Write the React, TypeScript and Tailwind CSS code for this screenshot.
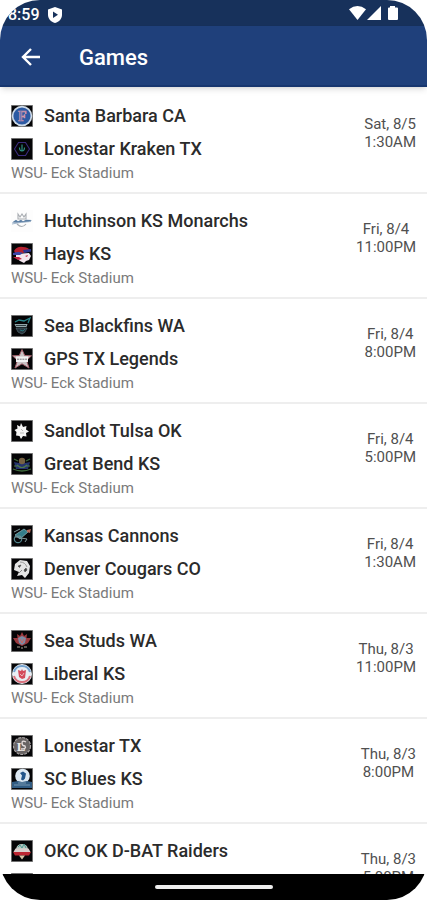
import type { ReactNode } from 'react';

type Team = {
  name?: string;
  logo: ReactNode;
};

type Game = {
  id: number;
  home: Team;
  away: Team;
  venue?: string;
  date: string;
  time: string;
};

const VENUE = 'WSU- Eck Stadium';

const games: Game[] = [
  {
    id: 1,
    home: { name: 'Santa Barbara CA', logo: <SantaBarbaraLogo /> },
    away: { name: 'Lonestar Kraken TX', logo: <KrakenLogo /> },
    venue: VENUE,
    date: 'Sat, 8/5',
    time: '1:30AM',
  },
  {
    id: 2,
    home: { name: 'Hutchinson KS Monarchs', logo: <MonarchsLogo /> },
    away: { name: 'Hays KS', logo: <HaysLogo /> },
    venue: VENUE,
    date: 'Fri, 8/4',
    time: '11:00PM',
  },
  {
    id: 3,
    home: { name: 'Sea Blackfins WA', logo: <BlackfinsLogo /> },
    away: { name: 'GPS TX Legends', logo: <LegendsLogo /> },
    venue: VENUE,
    date: 'Fri, 8/4',
    time: '8:00PM',
  },
  {
    id: 4,
    home: { name: 'Sandlot Tulsa OK', logo: <SandlotLogo /> },
    away: { name: 'Great Bend KS', logo: <GreatBendLogo /> },
    venue: VENUE,
    date: 'Fri, 8/4',
    time: '5:00PM',
  },
  {
    id: 5,
    home: { name: 'Kansas Cannons', logo: <CannonsLogo /> },
    away: { name: 'Denver Cougars CO', logo: <CougarsLogo /> },
    venue: VENUE,
    date: 'Fri, 8/4',
    time: '1:30AM',
  },
  {
    id: 6,
    home: { name: 'Sea Studs WA', logo: <StudsLogo /> },
    away: { name: 'Liberal KS', logo: <LiberalLogo /> },
    venue: VENUE,
    date: 'Thu, 8/3',
    time: '11:00PM',
  },
  {
    id: 7,
    home: { name: 'Lonestar TX', logo: <LonestarLogo /> },
    away: { name: 'SC Blues KS', logo: <BluesLogo /> },
    venue: VENUE,
    date: 'Thu, 8/3',
    time: '8:00PM',
  },
  {
    id: 8,
    home: { name: 'OKC OK D-BAT Raiders', logo: <RaidersLogo /> },
    away: { logo: <LogoFrame /> },
    date: 'Thu, 8/3',
    time: '5:00PM',
  },
];

function LogoFrame({ children, light }: { children?: ReactNode; light?: boolean }) {
  return (
    <svg viewBox="0 0 22 22" className="size-[22px] shrink-0" aria-hidden="true">
      <rect width="22" height="22" fill={light ? '#fdfdfd' : '#8a8a8a'} />
      {!light && <rect x="0.8" y="0.8" width="20.4" height="20.4" fill="#050507" />}
      {children}
    </svg>
  );
}

function SantaBarbaraLogo() {
  return (
    <LogoFrame>
      <circle cx="11" cy="11" r="10.3" fill="#cfdbe8" />
      <circle cx="11" cy="11" r="8.6" fill="#2c5aa3" />
      <text x="11.3" y="16" textAnchor="middle" fontFamily="Liberation Serif, serif" fontWeight="700" fontSize="14" fill="#5b6fb8" stroke="#d797a8" strokeWidth="0.7">
        F
      </text>
    </LogoFrame>
  );
}

function KrakenLogo() {
  return (
    <LogoFrame>
      <path d="M7.500 4.500h7l4 6.500-4 6.500h-7L3.500 11z" fill="none" stroke="#3b2c7c" strokeWidth="1.1" />
      <path d="M11 6.500v6M8.500 9.500c0 2.500 1 3.500 2.500 3.500s2.500-1 2.500-3.500" fill="none" stroke="#2e8f83" strokeWidth="1.2" />
    </LogoFrame>
  );
}

function MonarchsLogo() {
  return (
    <LogoFrame light>
      <path d="M7 4l2 3 2-3 2 3 2-3v5H7zM6 14q5 5 9 0" fill="none" stroke="#a9adb2" strokeWidth="1.1" />
      <path d="M1 12.5l4-2.8 2 1.6 3-1.6 2 1.6 3-1.6 6 .3-3 1.7-7 .6-5 .5z" fill="#5c7fa4" />
      <path d="M1 14q9-2 19-2.5" fill="none" stroke="#8ca5bf" strokeWidth="0.8" />
    </LogoFrame>
  );
}

function HaysLogo() {
  return (
    <LogoFrame>
      <path d="M5 11l13-1 2 3-2 4-3 1-2 2-4-2-4-3z" fill="#f3e6ee" />
      <path d="M3 8q3-5 9-4 5 0 8 4l-8 2-7 1z" fill="#b5202f" />
      <path d="M12 7l8-1v2.500l-7 1.500z" fill="#2a348f" />
      <path d="M2 10q6-2 10 0l-3 2-7 0z" fill="#3a45a8" />
      <path d="M2 14l6 0 3 2-4 1zM14 13l3-1-1 2z" fill="#c22645" />
    </LogoFrame>
  );
}

function BlackfinsLogo() {
  return (
    <LogoFrame>
      <path d="M4 7l4-2 5 1 6-3-2 5" fill="none" stroke="#27848a" strokeWidth="1.3" />
      <path d="M3.500 9h13l-1 3H5z" fill="#93a7ab" />
      <path d="M5 10.5h10" stroke="#152327" strokeWidth="0.8" />
      <path d="M5 13h11l-2 4-3 2-4-2z" fill="#27343c" stroke="#546a72" strokeWidth="0.7" />
      <path d="M9 15l3 1 2-2" fill="none" stroke="#27848a" strokeWidth="0.8" />
    </LogoFrame>
  );
}

function LegendsLogo() {
  return (
    <LogoFrame>
      <path d="M11 1.5l2.7 6 6.8.3-5 4.6 2.500 7.600-7-4.200L4 20l2.500-7.600-5-4.600 6.800-.3z" fill="#c9c2c4" stroke="#a5606b" strokeWidth="1" />
      <path d="M5 8.500h12v5.500H5z" fill="#f2f2f2" />
      <path d="M6 11.2h10" stroke="#77767a" strokeWidth="1" strokeDasharray="2 0.7" />
    </LogoFrame>
  );
}

function SandlotLogo() {
  return (
    <LogoFrame>
      <path d="M10 3l2 4 3.500-1-.5 3.500 3 2-3 1.500.5 3.500-3.500-.5-2 3-1.500-3-3.500-.5.5-3.500-2-2 3-1.500L6 5l3 1.500z" fill="#f4f4f4" />
      <path d="M10 9l2 2M9 13h4" stroke="#aaa" strokeWidth="0.8" />
    </LogoFrame>
  );
}

function GreatBendLogo() {
  return (
    <LogoFrame>
      <path d="M3 6l4 2M19 6l-4 2M2 16q9 4 18 0" stroke="#3f6b3d" strokeWidth="1.3" fill="none" />
      <path d="M3 9l5 1 3-2 3 2 5-1-2 7H5z" fill="#25346f" />
      <circle cx="11" cy="8" r="3.2" fill="#776243" />
      <path d="M6 12q5 5 10 0M3 13h4M15 13h4" stroke="#4f7b4a" strokeWidth="1.1" fill="none" />
    </LogoFrame>
  );
}

function CannonsLogo() {
  return (
    <LogoFrame>
      <path d="M4 10l9-6 4 3-8 7z" fill="#347e8b" stroke="#9ac1c6" strokeWidth="0.7" />
      <circle cx="7" cy="14" r="3.7" fill="none" stroke="#51848c" strokeWidth="1.2" />
      <path d="M10 13l6 1-2 3M3 7l6-3M4 12h6" fill="none" stroke="#859da0" strokeWidth="1" />
      <path d="M16 5l4-1-1 4-3-1z" fill="#b46b5c" />
    </LogoFrame>
  );
}

function CougarsLogo() {
  return (
    <LogoFrame>
      <path d="M4 6l5-4 7 1 3 5-1 7-4 5-3-3-5 1 2-4-5-2z" fill="#e5e5e5" />
      <path d="M7 8l3-1-1.500 2.500zM13 12l2-2 1 2-2 2zM8 15l3-3" fill="#444" stroke="#444" strokeWidth="0.6" />
      <path d="M9 4q5 0 7 5" fill="none" stroke="#9b9b9b" strokeWidth="1" />
    </LogoFrame>
  );
}

function StudsLogo() {
  return (
    <LogoFrame>
      <path d="M11 2l2 4 3-2-.5 4L20 8l-3 5-6 3-6-3-3-5h4.500L6 4l3 2z" fill="#9c3a3f" />
      <path d="M7 8l4-2 4 2-1 5-3 2-3-2z" fill="#7d8ba5" />
      <path d="M9 9l2 4 2-4" fill="none" stroke="#d4635c" strokeWidth="1" />
      <path d="M6 17h3M13 17h3M10 18h2" stroke="#b2a59a" strokeWidth="1.2" />
    </LogoFrame>
  );
}

function LiberalLogo() {
  return (
    <LogoFrame>
      <circle cx="11" cy="11" r="10" fill="#e9eef4" />
      <path d="M3 9a8.300 8.300 0 0 1 16 0" fill="none" stroke="#75a3cf" strokeWidth="2" />
      <path d="M3 13a8.300 8.300 0 0 0 16 0" fill="none" stroke="#d9707c" strokeWidth="2" />
      <path d="M7 7l3 1 1-2 1 2 3-1-1 8-3 1-3-2z" fill="#d44a5c" />
      <path d="M9 11l2 2 2-3" fill="none" stroke="#f0cfd4" strokeWidth="0.8" />
    </LogoFrame>
  );
}

function LonestarLogo() {
  return (
    <LogoFrame>
      <circle cx="11" cy="11" r="8.500" fill="#696464" stroke="#aaa5a5" strokeWidth="1.200" strokeDasharray="3 1" />
      <text x="10" y="15.500" textAnchor="middle" fontFamily="Liberation Serif, serif" fontWeight="700" fontSize="13" fill="#f1ecec">
        L
      </text>
      <path d="M15 7q-4-2-4 1t3 3q2 3-4 3" fill="none" stroke="#e6dede" strokeWidth="1.300" />
    </LogoFrame>
  );
}

function BluesLogo() {
  return (
    <LogoFrame>
      <circle cx="11.500" cy="8" r="7.300" fill="#dce8f2" />
      <path d="M9 5l3-1.500 3 2-1 5-2 2-2-1 1-4z" fill="#205489" />
      <path d="M1 14l6-1 4 1 5-1 5 1v6H1z" fill="#315c83" />
      <path d="M3 17h16M7 15h8" stroke="#7f9fb8" strokeWidth="0.9" />
    </LogoFrame>
  );
}

function RaidersLogo() {
  return (
    <LogoFrame>
      <path d="M5 9q1-5 6-5t6 5z" fill="#b9c8c0" />
      <path d="M7 7l2-2 2 3 2-4 2 4" fill="none" stroke="#4c9a94" strokeWidth="1" />
      <path d="M2.500 12l2-3.500h13l2 3.500z" fill="#d9cfcd" />
      <path d="M2 12h18l-2 3.500H4z" fill="#bc2632" />
      <path d="M8 15.500h6l-3 4z" fill="#d9c4a7" />
    </LogoFrame>
  );
}

function StatusBar() {
  return (
    <div className="flex h-[26px] shrink-0 items-center justify-between bg-[#17315b] pr-7 pl-2 text-white">
      <div className="flex items-center gap-2 pt-1">
        <span className="text-base leading-5 font-medium">8:59</span>
        <svg viewBox="0 0 14 16" className="h-4 w-[14px]" aria-hidden="true">
          <path d="M7 0l7 2.600v5.200c0 4-2.800 7-7 8.200-4.200-1.200-7-4.200-7-8.200V2.600z" fill="#fff" />
          <path d="M5 4.600l5 3.100-5 3.200z" fill="#17315b" />
        </svg>
      </div>
      <svg viewBox="0 0 50 16" className="h-4 w-[50px]" aria-hidden="true">
        <path d="M0 4.200Q8.500-2.400 17 4.200L8.500 15z" fill="#fff" />
        <path d="M32 1v14H18z" fill="#fff" />
        <path d="M41 1h5v1.500h2q1 0 1 1V14q0 1-1 1h-8q-1 0-1-1V3.500q0-1 1-1h1z" fill="#fff" />
      </svg>
    </div>
  );
}

function AppBar() {
  return (
    <header className="relative flex h-[61px] shrink-0 items-center gap-9 border-b-2 border-[#17366f] bg-[#1f407b] pt-[3px] pl-[19px] text-white shadow-md">
      <button type="button" aria-label="Back" className="flex size-6 items-center justify-center">
        <svg viewBox="0 0 24 24" className="size-6" fill="none" stroke="currentColor" strokeWidth="2.400" aria-hidden="true">
          <path d="M21 12H4.500M12 4l-8 8 8 8" />
        </svg>
      </button>
      <h1 className="text-[22px] font-medium">Games</h1>
    </header>
  );
}

function TeamLine({ team }: { team: Team }) {
  return (
    <div className="flex h-[33px] items-center gap-[11px]">
      {team.logo}
      {team.name && <span className="text-lg font-medium text-[#2b2b2b]">{team.name}</span>}
    </div>
  );
}

function GameRow({ game }: { game: Game }) {
  return (
    <li className="flex h-[105px] shrink-0 items-start justify-between border-b-2 border-[#eeeeee] px-[11px] pt-[10px]">
      <div>
        <TeamLine team={game.home} />
        <TeamLine team={game.away} />
        {game.venue && <p className="text-[15px] leading-4 text-[#7a7a7a]">{game.venue}</p>}
      </div>
      <div className="pt-4 text-center text-[15px] leading-[18px] text-[#505050]">
        <p>{game.date}</p>
        <p>{game.time}</p>
      </div>
    </li>
  );
}

export default function App() {
  return (
    <div className="h-screen bg-white font-['Roboto',sans-serif]">
      <div className="flex h-full flex-col overflow-hidden rounded-[40px] bg-white">
        <StatusBar />
        <AppBar />
        <main className="min-h-0 flex-1 overflow-hidden pt-0.5">
          <ul className="flex flex-col">
            {games.map((game) => (
              <GameRow key={game.id} game={game} />
            ))}
          </ul>
        </main>
        <div className="flex h-[26px] shrink-0 items-center justify-center bg-black">
          <div className="h-1 w-[118px] rounded-full bg-[#eeeeee]" />
        </div>
      </div>
    </div>
  );
}
